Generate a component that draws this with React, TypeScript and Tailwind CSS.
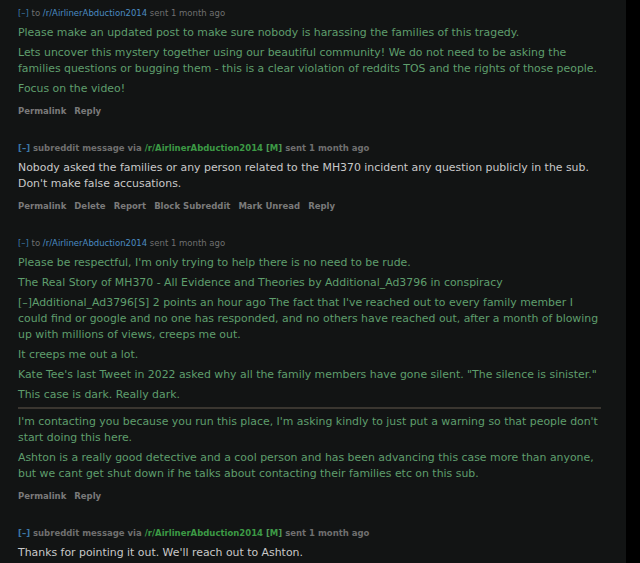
const body = "font-['DejaVu_Sans',Verdana,sans-serif]"

function Header({ mod }: { mod?: boolean }) {
  if (mod) {
    return (
      <div className={`${body} text-[8.5px] font-bold leading-[12px] text-[#6f6f6f]`}>
        <span className="text-[#3b78a8]">[–]</span> subreddit message via{' '}
        <span className="text-[#3c9a45]">/r/AirlinerAbduction2014</span>{' '}
        <span className="text-[#4f9a55]">[<span className="text-[#3c9a45]">M</span>]</span> sent 1 month ago
      </div>
    )
  }
  return (
    <div className={`${body} text-[8.5px] leading-[12px] text-[#6f6f6f]`}>
      <span className="text-[#3b78a8]">[–]</span> to{' '}
      <span className="text-[#4a8bc2]">/r/AirlinerAbduction2014</span> sent 1 month ago
    </div>
  )
}

function Buttons({ items }: { items: string[] }) {
  return (
    <div className={`${body} mt-[8px] flex gap-[8px] text-[8.5px] font-bold leading-[12px] text-[#7a7a7a]`}>
      {items.map((b) => (
        <span key={b}>{b}</span>
      ))}
    </div>
  )
}

function Message({
  mod,
  children,
  buttons,
}: {
  mod?: boolean
  children: React.ReactNode
  buttons?: string[]
}) {
  return (
    <div className="mb-[25px]">
      <Header mod={mod} />
      <div
        className={`${body} mt-[6px] flex flex-col gap-[4px] text-[10.9px] leading-[16px] ${
          mod ? 'text-[#c9c9c9]' : 'text-[#5f9e6d]'
        }`}
      >
        {children}
      </div>
      {buttons && <Buttons items={buttons} />}
    </div>
  )
}

export default function App() {
  return (
    <div className="flex h-[563px] w-[640px] overflow-hidden bg-[#121414]">
      <div className="w-[601px] shrink-0 pl-[18px] pt-[7px]">
        <Message buttons={['Permalink', 'Reply']}>
          <p>Please make an updated post to make sure nobody is harassing the families of this tragedy.</p>
          <p>
            Lets uncover this mystery together using our beautiful community! We do not need to be asking the
            families questions or bugging them - this is a clear violation of reddits TOS and the rights of those
            people.
          </p>
          <p>Focus on the video!</p>
        </Message>

        <Message mod buttons={['Permalink', 'Delete', 'Report', 'Block Subreddit', 'Mark Unread', 'Reply']}>
          <p>
            Nobody asked the families or any person related to the MH370 incident any question publicly in the sub.
            Don't make false accusations.
          </p>
        </Message>

        <Message buttons={['Permalink', 'Reply']}>
          <p>Please be respectful, I'm only trying to help there is no need to be rude.</p>
          <p>The Real Story of MH370 - All Evidence and Theories by Additional_Ad3796 in conspiracy</p>
          <p>
            [–]Additional_Ad3796[S] 2 points an hour ago The fact that I've reached out to every family member I
            could find or google and no one has responded, and no others have reached out, after a month of blowing
            up with millions of views, creeps me out.
          </p>
          <p>It creeps me out a lot.</p>
          <p>
            Kate Tee's last Tweet in 2022 asked why all the family members have gone silent. "The silence is
            sinister."
          </p>
          <p>This case is dark. Really dark.</p>
          <hr className="mt-0 mb-[1px] border-t-2 border-[#3a3630]" />
          <p>
            I'm contacting you because you run this place, I'm asking kindly to just put a warning so that people
            don't start doing this here.
          </p>
          <p>
            Ashton is a really good detective and a cool person and has been advancing this case more than anyone,
            but we cant get shut down if he talks about contacting their families etc on this sub.
          </p>
        </Message>

        <Message mod>
          <p>Thanks for pointing it out. We'll reach out to Ashton.</p>
        </Message>
      </div>
      <div className="flex-1" />
      <div className="w-[14px] shrink-0 bg-black" />
    </div>
  )
}
